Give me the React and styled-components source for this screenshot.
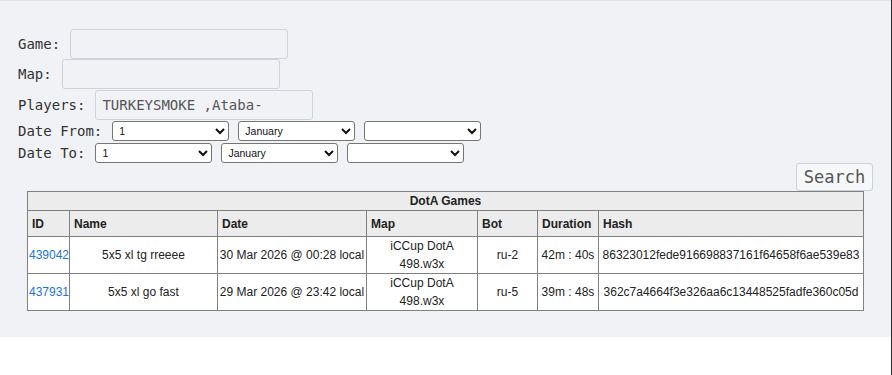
import React from "react";
import styled, { createGlobalStyle } from "styled-components";

const GlobalStyle = createGlobalStyle`
  html, body { margin: 0; padding: 0; background: #ffffff; }
  body { font-family: "Liberation Sans", Arial, sans-serif; }
`;

const Frame = styled.div`
  min-height: 375px;
  border-right: 1px solid #2b2b2b;
  box-sizing: border-box;
`;

const Panel = styled.div`
  background: #f1f2f6;
  border-top: 1px solid #e1e3e8;
  padding: 27px 18px 26px 18px;
`;

const Form = styled.div`
  display: flex;
  flex-direction: column;
`;

const Row = styled.div`
  display: flex;
  align-items: center;
  gap: 10px;
  height: ${(p) => p.$h}px;
`;

const Label = styled.span`
  font-family: "DejaVu Sans Mono", "Liberation Mono", monospace;
  font-size: 14px;
  color: #333;
  white-space: pre;
`;

const TextInput = styled.input`
  box-sizing: border-box;
  width: 218px;
  height: 30px;
  border: 1px solid #cfd2d8;
  border-radius: 3px;
  background: #f1f2f6;
  padding: 0 6px;
  margin: 0;
  font-family: "DejaVu Sans Mono", "Liberation Mono", monospace;
  font-size: 14px;
  color: #555;
  outline: none;
`;

const Selects = styled.div`
  display: flex;
  gap: 9px;
`;

const Select = styled.select`
  box-sizing: border-box;
  width: 117px;
  height: 20px;
  border: 1px solid #767676;
  border-radius: 3px;
  background-color: #ffffff;
  font-family: "Liberation Sans", Arial, sans-serif;
  font-size: 10.5px;
  color: #111;
  padding: 0 2px;
  margin: 0;
`;

const ButtonRow = styled.div`
  display: flex;
  justify-content: flex-end;
  margin-top: -1px;
`;

const SearchButton = styled.button`
  box-sizing: border-box;
  width: 77px;
  height: 28px;
  border: 1px solid #cdd0d5;
  border-radius: 3px;
  background: #f6f7f9;
  color: #555;
  font-family: "DejaVu Sans Mono", "Liberation Mono", monospace;
  font-size: 17px;
  padding: 0;
  margin: 0;
`;

const Table = styled.table`
  border-collapse: collapse;
  table-layout: fixed;
  width: 836px;
  margin: 0 auto;
  border: 1px solid #808080;
  font-family: "Liberation Sans", Arial, sans-serif;
  font-size: 12px;
  color: #222;
`;

const Caption = styled.th`
  background: #ececec;
  border: 1px solid #808080;
  height: 18px;
  padding: 0;
  line-height: 18px;
  text-align: center;
  font-weight: bold;
`;

const Head = styled.th`
  background: #ececec;
  border: 1px solid #808080;
  height: 25px;
  padding: 0 0 0 4px;
  text-align: left;
  font-weight: bold;
`;

const Cell = styled.td`
  background: #ffffff;
  border: 1px solid #808080;
  padding: 0 1px;
  line-height: 18px;
  height: 36px;
  text-align: center;
  white-space: ${(p) => (p.$wrap ? "normal" : "nowrap")};
`;

const IdLink = styled.a`
  color: #1a73e8;
  text-decoration: none;
`;

const days = Array.from({ length: 31 }, (_, i) => String(i + 1));
const months = [
  "January", "February", "March", "April", "May", "June",
  "July", "August", "September", "October", "November", "December",
];

const DateSelects = () => (
  <Selects>
    <Select defaultValue="1">
      {days.map((d) => (
        <option key={d}>{d}</option>
      ))}
    </Select>
    <Select defaultValue="January">
      {months.map((m) => (
        <option key={m}>{m}</option>
      ))}
    </Select>
    <Select defaultValue="">
      <option value=""></option>
      <option>2026</option>
      <option>2025</option>
    </Select>
  </Selects>
);

const cols = [42, 148, 149, 111, 60, 61, 265];
const heads = ["ID", "Name", "Date", "Map", "Bot", "Duration", "Hash"];

const games = [
  {
    id: "439042",
    name: "5x5 xl tg rreeee",
    date: "30 Mar 2026 @ 00:28 local",
    map: "iCCup DotA 498.w3x",
    bot: "ru-2",
    duration: "42m : 40s",
    hash: "86323012fede916698837161f64658f6ae539e83",
  },
  {
    id: "437931",
    name: "5x5 xl go fast",
    date: "29 Mar 2026 @ 23:42 local",
    map: "iCCup DotA 498.w3x",
    bot: "ru-5",
    duration: "39m : 48s",
    hash: "362c7a4664f3e326aa6c13448525fadfe360c05d",
  },
];

export default function App() {
  return (
    <Frame>
      <GlobalStyle />
      <Panel>
        <Form>
          <Row $h={31}>
            <Label>Game:</Label>
            <TextInput />
          </Row>
          <Row $h={30}>
            <Label>Map:</Label>
            <TextInput />
          </Row>
          <Row $h={31}>
            <Label>Players:</Label>
            <TextInput defaultValue="TURKEYSMOKE ,Ataba-" />
          </Row>
          <Row $h={22}>
            <Label>Date From:</Label>
            <DateSelects />
          </Row>
          <Row $h={22}>
            <Label>Date To:</Label>
            <DateSelects />
          </Row>
        </Form>
        <ButtonRow>
          <SearchButton>Search</SearchButton>
        </ButtonRow>
        <Table>
          <colgroup>
            {cols.map((w, i) => (
              <col key={i} style={{ width: w }} />
            ))}
          </colgroup>
          <thead>
            <tr>
              <Caption colSpan={7}>DotA Games</Caption>
            </tr>
            <tr>
              {heads.map((h) => (
                <Head key={h}>{h}</Head>
              ))}
            </tr>
          </thead>
          <tbody>
            {games.map((g) => (
              <tr key={g.id}>
                <Cell>
                  <IdLink href="#">{g.id}</IdLink>
                </Cell>
                <Cell>{g.name}</Cell>
                <Cell>{g.date}</Cell>
                <Cell $wrap>{g.map}</Cell>
                <Cell>{g.bot}</Cell>
                <Cell>{g.duration}</Cell>
                <Cell>{g.hash}</Cell>
              </tr>
            ))}
          </tbody>
        </Table>
      </Panel>
    </Frame>
  );
}
